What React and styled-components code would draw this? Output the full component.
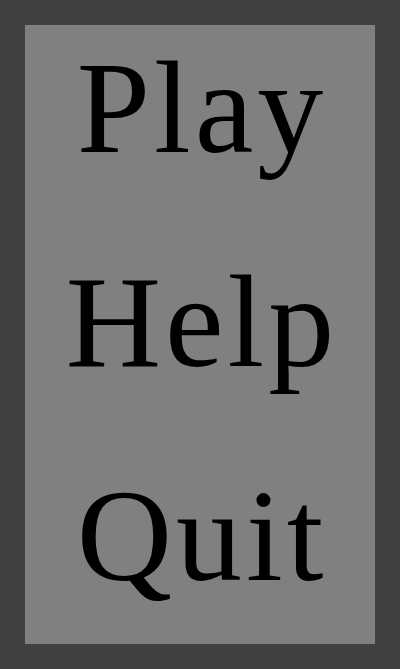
import React from "react";
import styled, { createGlobalStyle } from "styled-components";

const GlobalStyle = createGlobalStyle`
  html, body {
    margin: 0;
    padding: 0;
    background: #404040;
  }
`;

const Screen = styled.div`
  box-sizing: border-box;
  width: 400px;
  height: 669px;
  padding: 25px;
  background: #404040;
`;

const Menu = styled.nav`
  box-sizing: border-box;
  height: 100%;
  background: #808080;
  display: flex;
  flex-direction: column;
  align-items: center;
  gap: 82px;
  padding-top: 17px;
`;

const MenuItem = styled.div`
  font-family: "Liberation Serif", "DejaVu Serif", serif;
  font-size: 132px;
  line-height: 1;
  color: #000;
  letter-spacing: 4px;
  text-indent: 4px;
  cursor: pointer;
`;

const items = ["Play", "Help", "Quit"];

const App = () => (
  <>
    <GlobalStyle />
    <Screen>
      <Menu>
        {items.map((label) => (
          <MenuItem key={label}>{label}</MenuItem>
        ))}
      </Menu>
    </Screen>
  </>
);

export default App;
